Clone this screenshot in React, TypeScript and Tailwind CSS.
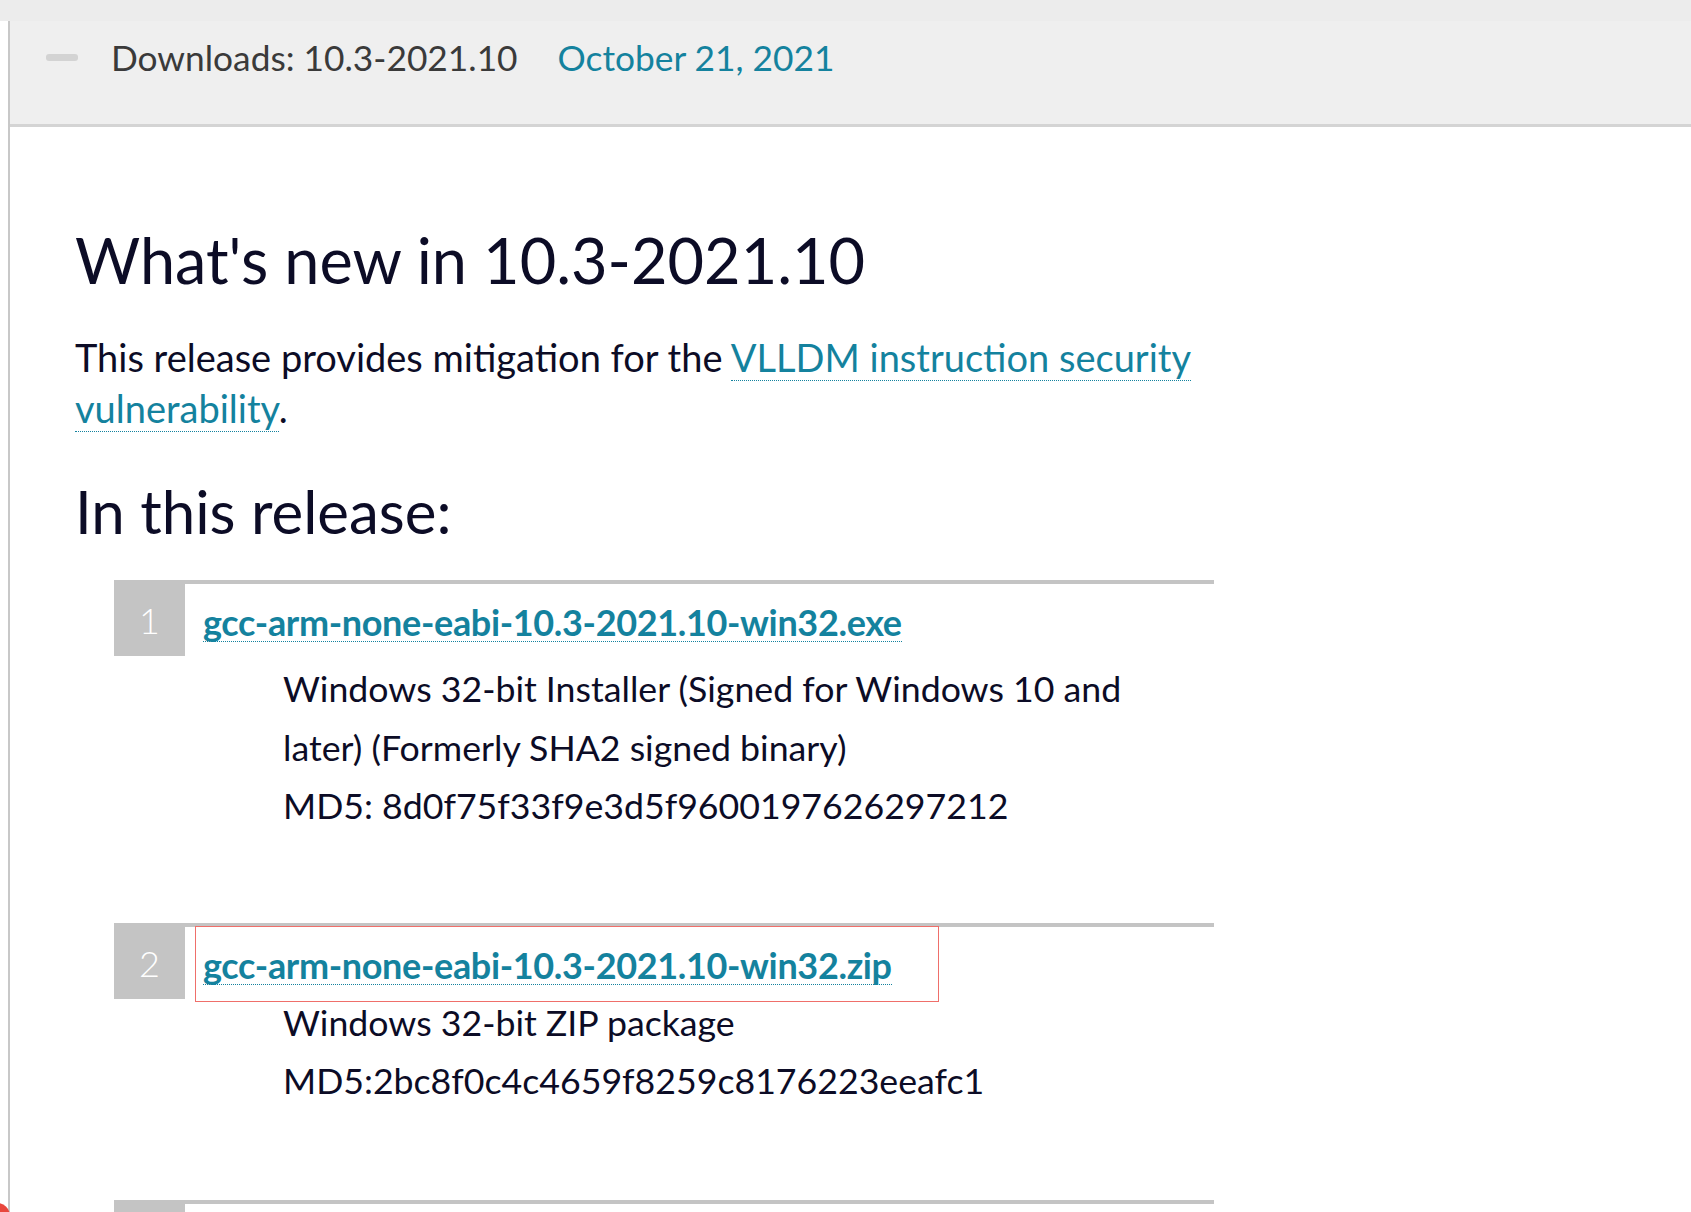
import React from 'react';

const items = [
    {
        n: 1,
        file: 'gcc-arm-none-eabi-10.3-2021.10-win32.exe',
        lines: ['Windows 32-bit Installer (Signed for Windows 10 and', 'later) (Formerly SHA2 signed binary)', 'MD5: 8d0f75f33f9e3d5f9600197626297212'],
        gap: 'mt-[4px] mb-[87px]',
        boxed: false,
    },
    {
        n: 2,
        file: 'gcc-arm-none-eabi-10.3-2021.10-win32.zip',
        lines: ['Windows 32-bit ZIP package', 'MD5:2bc8f0c4c4659f8259c8176223eeafc1'],
        gap: 'mt-[-5px] mb-[89px]',
        boxed: true,
    },
];

export default function App() {
    return (
        <div className="relative h-[1212px] overflow-hidden bg-white font-['Lato','Noto_Sans',sans-serif] text-[#0c0c26]">
            <div className="h-[21px] bg-[#ececec]" />
            <div className="ml-[8px] h-[1191px] border-l-2 border-[#c8c8c8]">
                {/* release header */}
                <div className="flex h-[106px] items-start border-b-[3px] border-[#d4d4d4] bg-[#efefef] pl-[36px] pt-[15px]">
                    <div className="flex h-[43px] items-center">
                        <span className="h-[7px] w-[32px] rounded-[3px] bg-[#d3d3d3]" />
                    </div>
                    <span className="ml-[33px] text-[35.3px] leading-[43px] text-[#3a3a3a]">Downloads: 10.3-2021.10</span>
                    <span className="ml-[40px] text-[35.3px] leading-[43px] text-[#14829e]">October 21, 2021</span>
                </div>

                <div className="pl-[65px]">
                    <h1 className="mt-[94px] text-[63px] leading-[77px]">What's new in 10.3-2021.10</h1>
                    <p className="mt-[34px] w-[1200px] text-[38px] leading-[51px]">
                        This release provides mitigation for the{' '}
                        <a className="border-b border-dotted border-[#14829e] text-[#14829e]">VLLDM instruction security vulnerability</a>.
                    </p>
                    <h2 className="mt-[40px] text-[60px] leading-[74px]">In this release:</h2>

                    <ol className="ml-[39px] mt-[32px] w-[1100px]">
                        {items.map(item => (
                            <li key={item.n} className="relative border-t-4 border-[#c4c4c4]">
                                <div className="flex items-start">
                                    <div className="flex h-[72px] w-[71px] shrink-0 items-center justify-center bg-[#c4c4c4] text-[36px] font-light text-white">
                                        {item.n}
                                    </div>
                                    <a className="ml-[18px] mt-[19px] border-b border-dotted border-[#14829e] text-[36px] font-bold leading-[38px] text-[#14829e] tracking-[-0.35px]">
                                        {item.file}
                                    </a>
                                </div>
                                <div className={`ml-[169px] ${item.gap} text-[35.7px] leading-[58.5px]`}>
                                    {item.lines.map(line => (
                                        <div key={line} className="whitespace-nowrap">{line}</div>
                                    ))}
                                </div>
                                {item.boxed && (
                                    <div className="absolute left-[81px] top-[-1px] h-[76px] w-[744px] border border-[#ef6f6a]" />
                                )}
                            </li>
                        ))}
                        <li className="border-t-4 border-[#c4c4c4]">
                            <div className="h-[40px] w-[71px] bg-[#c4c4c4]" />
                        </li>
                    </ol>
                </div>
            </div>
            <div className="absolute left-[-16px] top-[1203px] h-[26px] w-[26px] rounded-full bg-[#e8473d]" />
        </div>
    );
}
